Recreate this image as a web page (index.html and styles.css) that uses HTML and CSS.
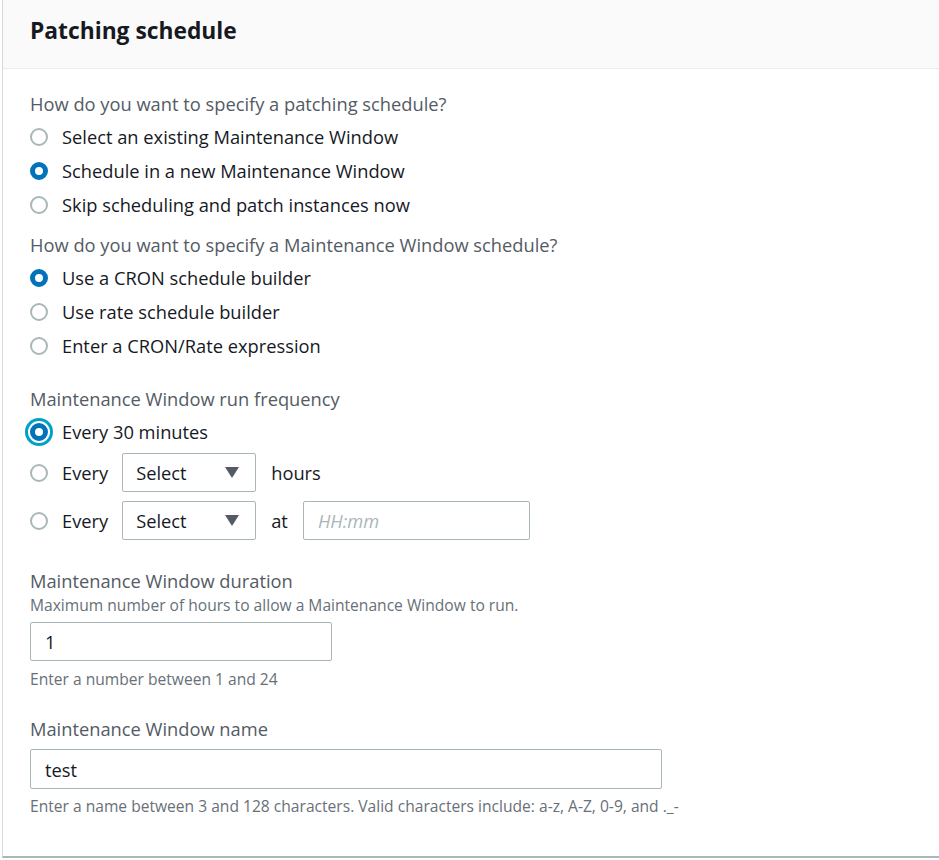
FILE: index.html
```html
<!DOCTYPE html>
<html lang="en">
<head>
<meta charset="utf-8">
<title>Patching schedule</title>
<link rel="stylesheet" href="styles.css">
</head>
<body>
<section class="panel">
  <header class="panel-header">
    <h2 class="panel-title">Patching schedule</h2>
  </header>
  <div class="panel-body">
    <div class="question">How do you want to specify a patching schedule?</div>
    <div class="radio-list">
      <div class="radio-row"><span class="radio"></span><span class="radio-label">Select an existing Maintenance Window</span></div>
      <div class="radio-row"><span class="radio radio-checked"></span><span class="radio-label">Schedule in a new Maintenance Window</span></div>
      <div class="radio-row"><span class="radio"></span><span class="radio-label">Skip scheduling and patch instances now</span></div>
    </div>

    <div class="question question-second">How do you want to specify a Maintenance Window schedule?</div>
    <div class="radio-list">
      <div class="radio-row"><span class="radio radio-checked"></span><span class="radio-label">Use a CRON schedule builder</span></div>
      <div class="radio-row"><span class="radio"></span><span class="radio-label">Use rate schedule builder</span></div>
      <div class="radio-row"><span class="radio"></span><span class="radio-label">Enter a CRON/Rate expression</span></div>
    </div>

    <div class="field-label freq-label">Maintenance Window run frequency</div>
    <div class="radio-row"><span class="radio radio-checked radio-focused"></span><span class="radio-label">Every 30 minutes</span></div>
    <div class="radio-row select-row select-row-first">
      <span class="radio"></span><span class="radio-label">Every</span>
      <div class="select"><span>Select</span><span class="caret"></span></div>
      <span class="after-text">hours</span>
    </div>
    <div class="radio-row select-row select-row-second">
      <span class="radio"></span><span class="radio-label">Every</span>
      <div class="select"><span>Select</span><span class="caret"></span></div>
      <span class="after-text">at</span>
      <div class="input input-time"><span class="placeholder">HH:mm</span></div>
    </div>

    <div class="field-label duration-label">Maintenance Window duration</div>
    <div class="field-desc">Maximum number of hours to allow a Maintenance Window to run.</div>
    <div class="input input-duration">1</div>
    <div class="field-hint">Enter a number between 1 and 24</div>

    <div class="field-label name-label">Maintenance Window name</div>
    <div class="input input-name">test</div>
    <div class="field-hint field-hint-name">Enter a name between 3 and 128 characters. Valid characters include: a-z, A-Z, 0-9, and ._-</div>
  </div>
</section>
</body>
</html>
```
FILE: styles.css
```css
html, body {
  margin: 0;
  padding: 0;
  overflow: hidden;
  background: #ffffff;
}
body {
  font-family: "Open Sans", "Noto Sans", sans-serif;
  color: #16191f;
  height: 860px;
}
.panel {
  margin-left: 2px;
  width: 960px;
  border-left: 1px solid #d5dbdb;
  border-bottom: 2px solid #aab7b8;
  background: #fff;
  box-sizing: border-box;
}
.panel-header {
  height: 69px;
  box-sizing: border-box;
  background: #fafafa;
  border-bottom: 1px solid #eaeded;
  padding-left: 27px;
  display: flex;
  align-items: center;
}
.panel-title {
  margin: 0;
  font-size: 22.8px;
  font-weight: 700;
  line-height: 30px;
  margin-top: -6px;
  color: #16191f;
}
.panel-body {
  padding: 23px 0 40px 27px;
}
.question {
  font-size: 18.3px;
  line-height: 24px;
  color: #545b64;
  margin-bottom: 4px;
}
.question-second {
  margin-top: 11px;
}
.radio-row {
  display: flex;
  align-items: center;
  height: 34px;
}
.radio {
  width: 18px;
  height: 18px;
  box-sizing: border-box;
  border: 2px solid #aab7b8;
  border-radius: 50%;
  background: #fff;
  flex: none;
  margin-right: 14px;
}
.radio-checked {
  border: 5.5px solid #0073bb;
}
.radio-focused {
  box-shadow: 0 0 0 2px #fff, 0 0 0 5px #00a1c9;
}
.radio-label {
  font-size: 18.3px;
  line-height: 24px;
  color: #16191f;
}
.field-label {
  font-size: 18.3px;
  line-height: 24px;
  color: #545b64;
}
.freq-label {
  margin-top: 24px;
  margin-bottom: 4px;
}
.select-row {
  height: 39px;
}
.select-row-first {
  margin-top: 4px;
}
.select-row-second {
  margin-top: 9px;
}
.select {
  margin-left: 14px;
  width: 134px;
  height: 39px;
  box-sizing: border-box;
  border: 1px solid #aab7b8;
  border-radius: 2px;
  display: flex;
  align-items: center;
  justify-content: space-between;
  padding: 0 16px 0 13px;
  font-size: 18.3px;
  color: #16191f;
}
.caret {
  width: 0;
  height: 0;
  border-left: 7px solid transparent;
  border-right: 7px solid transparent;
  border-top: 11px solid #545b64;
}
.after-text {
  margin-left: 15px;
  font-size: 18.3px;
  color: #16191f;
}
.input {
  height: 39px;
  box-sizing: border-box;
  border: 1px solid #aab7b8;
  border-radius: 2px;
  display: flex;
  align-items: center;
  padding-left: 14px;
  font-size: 18.3px;
  color: #16191f;
}
.input-time {
  margin-left: 15px;
  width: 227px;
}
.placeholder {
  font-style: italic;
  color: #aab7b8;
}
.duration-label {
  margin-top: 29px;
}
.field-desc {
  font-size: 15.6px;
  line-height: 20px;
  margin-top: 2px;
  color: #687078;
}
.input-duration {
  width: 302px;
  margin-top: 7px;
}
.field-hint {
  font-size: 15.6px;
  line-height: 20px;
  color: #687078;
  margin-top: 8px;
}
.name-label {
  margin-top: 28px;
}
.input-name {
  width: 632px;
  height: 40px;
  margin-top: 8px;
}
.field-hint-name {
  margin-top: 7px;
}
```
